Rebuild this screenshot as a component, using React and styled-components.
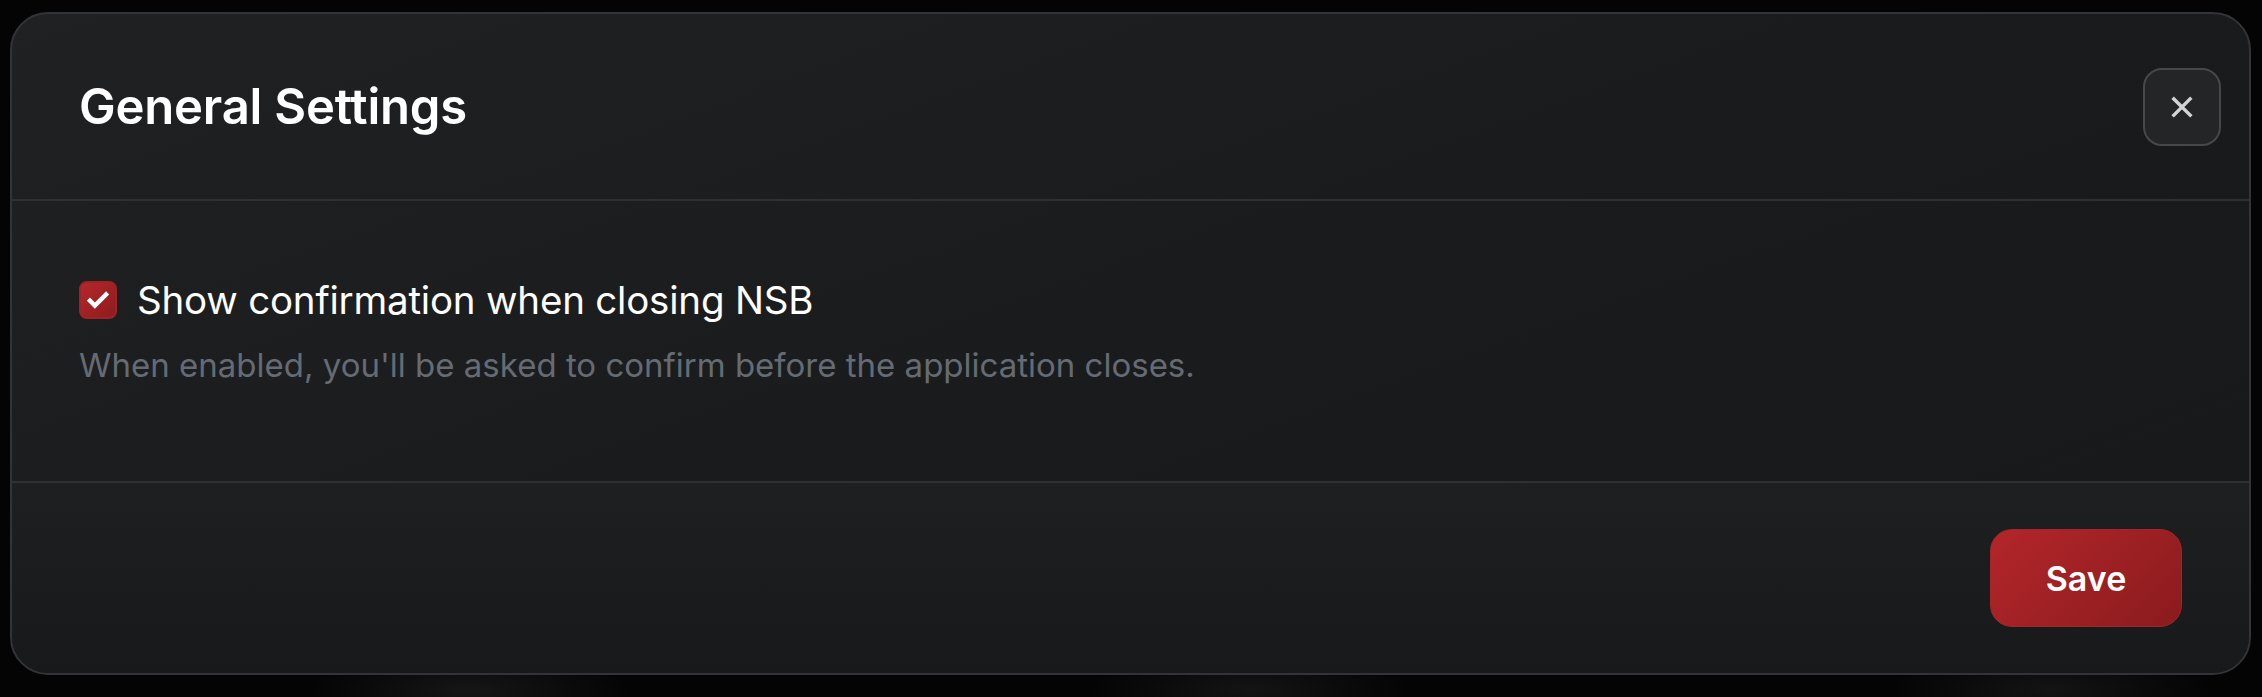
import styled, { createGlobalStyle } from "styled-components";
import { useState } from "react";

const GlobalStyle = createGlobalStyle`
  html, body {
    margin: 0;
    background: #040404;
  }
  body {
    font-family: "Inter", "Lato", sans-serif;
  }
`;

function CheckIcon() {
  return (
    <svg width="30" height="30" viewBox="0 0 24 24" fill="none">
      <path
        d="M5.5 12.5l4 4L18.5 7.5"
        stroke="#fff"
        strokeWidth="3.4"
        strokeLinecap="square"
        strokeLinejoin="miter"
      />
    </svg>
  );
}

function CloseIcon() {
  return (
    <svg width="30" height="30" viewBox="0 0 24 24" fill="none">
      <path
        d="M5.5 5.5l13 13M18.5 5.5l-13 13"
        stroke="#d4d4d6"
        strokeWidth="2.8"
        strokeLinecap="square"
      />
    </svg>
  );
}

function App() {
  const [confirmClose, setConfirmClose] = useState(true);

  return (
    <>
      <GlobalStyle />
      <Page>
        <Dialog>
          <Header>
            <Title>General Settings</Title>
            <CloseButton aria-label="Close">
              <CloseIcon />
            </CloseButton>
          </Header>
          <Body>
            <OptionRow onClick={() => setConfirmClose(!confirmClose)}>
              <Checkbox $checked={confirmClose}>
                {confirmClose && <CheckIcon />}
              </Checkbox>
              <OptionLabel>Show confirmation when closing NSB</OptionLabel>
            </OptionRow>
            <OptionHint>
              When enabled, you'll be asked to confirm before the application
              closes.
            </OptionHint>
          </Body>
          <Footer>
            <SaveButton>Save</SaveButton>
          </Footer>
        </Dialog>
      </Page>
    </>
  );
}

export default App;

const Page = styled.div`
  height: 697px;
  box-sizing: border-box;
  padding: 12px 11px 22px 10px;
  background:
    radial-gradient(ellipse 160px 40px at 470px 690px, rgba(40, 40, 40, 0.5), transparent),
    radial-gradient(ellipse 160px 40px at 1250px 690px, rgba(36, 36, 36, 0.5), transparent),
    radial-gradient(ellipse 160px 40px at 2050px 690px, rgba(36, 36, 36, 0.5), transparent),
    #040404;
`;

const Dialog = styled.div`
  height: 100%;
  box-sizing: border-box;
  display: flex;
  flex-direction: column;
  border: 2px solid #333437;
  border-radius: 38px;
  background: linear-gradient(160deg, #202123 0%, #1a1b1d 50%, #17181a 100%);
  overflow: hidden;
`;

const Header = styled.div`
  height: 185px;
  flex-shrink: 0;
  display: flex;
  align-items: center;
  justify-content: space-between;
  padding: 0 28px 0 67px;
  border-bottom: 2px solid #2f3033;
`;

const Title = styled.h2`
  margin: 0;
  color: #ffffff;
  font-size: 49px;
  line-height: 56px;
  font-weight: 600;
  letter-spacing: -0.2px;
`;

const CloseButton = styled.button`
  width: 78px;
  height: 78px;
  display: flex;
  align-items: center;
  justify-content: center;
  padding: 0;
  border: 2px solid #47484b;
  border-radius: 19px;
  background: #242527;
  cursor: pointer;
`;

const Body = styled.div`
  flex: 1;
  padding: 78px 67px 0;
  border-bottom: 2px solid #2f3033;
`;

const OptionRow = styled.label`
  display: flex;
  align-items: center;
  gap: 20px;
  cursor: pointer;
`;

const Checkbox = styled.span`
  width: 38px;
  height: 38px;
  box-sizing: border-box;
  display: flex;
  align-items: center;
  justify-content: center;
  border-radius: 8px;
  border: 2px solid ${(p) => (p.$checked ? "#9f2226" : "#4a4b4e")};
  background: ${(p) =>
    p.$checked ? "linear-gradient(135deg, #b6272b, #8c1c1f)" : "transparent"};
`;

const OptionLabel = styled.span`
  color: #ffffff;
  font-size: 38.5px;
  line-height: 42px;
  font-weight: 400;
  letter-spacing: -0.2px;
`;

const OptionHint = styled.p`
  margin: 24px 0 0;
  color: #656b73;
  font-size: 33px;
  line-height: 40px;
  font-weight: 400;
`;

const Footer = styled.div`
  height: 190px;
  flex-shrink: 0;
  display: flex;
  align-items: center;
  justify-content: flex-end;
  padding: 0 67px;
  background: linear-gradient(180deg, #1e1f21, #18191b);
`;

const SaveButton = styled.button`
  width: 192px;
  height: 98px;
  border: 1px solid #a42427;
  border-radius: 22px;
  background: linear-gradient(135deg, #b3262a 0%, #8a1b1e 100%);
  color: #ffffff;
  font-family: "Inter", "Lato", sans-serif;
  font-size: 34px;
  font-weight: 600;
  cursor: pointer;
`;
